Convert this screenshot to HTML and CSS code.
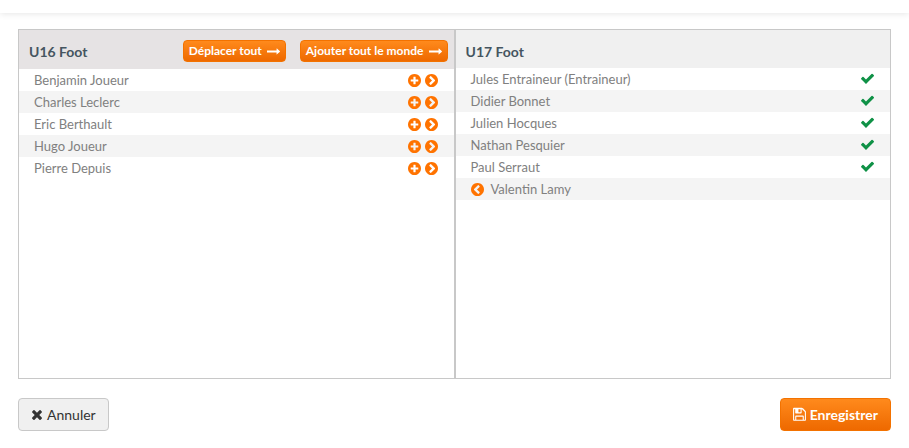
FILE: index.html
```html
<!DOCTYPE html>
<html lang="fr">
<head>
<meta charset="utf-8">
<meta name="viewport" content="width=device-width, initial-scale=1">
<title>Déplacer des membres</title>
<link rel="stylesheet" href="styles.css">
</head>
<body>
<svg class="sprite" aria-hidden="true">
  <symbol id="plus" viewBox="128 128 1536 1536"><path d="M1344 960v-128q0-26-19-45t-45-19h-256v-256q0-26-19-45t-45-19h-128q-26 0-45 19t-19 45v256h-256q-26 0-45 19t-19 45v128q0 26 19 45t45 19h256v256q0 26 19 45t45 19h128q26 0 45-19t19-45v-256h256q26 0 45-19t19-45zm320-64q0 209-103 385.500t-279.500 279.500-385.500 103-385.500-103-279.500-279.500-103-385.500 103-385.500 279.500-279.500 385.500-103 385.500 103 279.500 279.500 103 385.500z"/></symbol>
  <symbol id="chevron" viewBox="128 128 1536 1536"><path d="M845 1395l454-454q19-19 19-45t-19-45l-454-454q-19-19-45-19t-45 19l-102 102q-19 19-19 45t19 45l307 307-307 307q-19 19-19 45t19 45l102 102q19 19 45 19t45-19zm819-499q0 209-103 385.500t-279.500 279.500-385.500 103-385.500-103-279.500-279.500-103-385.500 103-385.500 279.500-279.500 385.500-103 385.500 103 279.500 279.500 103 385.500z"/></symbol>
  <symbol id="check" viewBox="121 128 1550 1792"><path d="M1671 566q0 40-28 68l-724 724-136 136q-28 28-68 28t-68-28l-136-136-362-362q-28-28-28-68t28-68l136-136q28-28 68-28t68 28l294 295 656-657q28-28 68-28t68 28l136 136q28 28 28 68z"/></symbol>
  <symbol id="times" viewBox="179 0 1434 1792"><path d="M1490 1322q0 40-28 68l-136 136q-28 28-68 28t-68-28l-294-294-294 294q-28 28-68 28t-68-28l-136-136q-28-28-28-68t28-68l294-294-294-294q-28-28-28-68t28-68l136-136q28-28 68-28t68 28l294 294 294-294q28-28 68-28t68 28l136 136q28 28 28 68t-28 68l-294 294 294 294q28 28 28 68z"/></symbol>
  <symbol id="floppy" viewBox="128 0 1536 1792"><path d="M512 1536h768v-384h-768v384zm896 0h128v-896q0-14-10-38.500t-20-34.500l-281-281q-10-10-34-20t-39-10v416q0 40-28 68t-68 28h-576q-40 0-68-28t-28-68v-416h-128v1280h128v-416q0-40 28-68t68-28h832q40 0 68 28t28 68v416zm-384-928v-320q0-13-9.500-22.500t-22.500-9.500h-192q-13 0-22.500 9.500t-9.500 22.500v320q0 13 9.500 22.500t22.500 9.500h192q13 0 22.500-9.500t9.500-22.500zm640 32v896q0 40-28 68t-68 28h-1344q-40 0-68-28t-28-68v-1344q0-40 28-68t68-28h928q40 0 88 20t76 48l280 280q28 28 48 76t20 88z"/></symbol>
  <symbol id="arrow" viewBox="32 0 1696 1792"><path d="M1728 893q0 14-10 24l-384 354q-16 14-35 6-19-9-19-29v-224h-1248q-14 0-23-9t-9-23v-192q0-14 9-23t23-9h1248v-224q0-21 19-29t35 5l384 350q10 10 10 23z"/></symbol>
</svg>
<div class="topbar"></div>
<main class="page">
  <div class="lists">
    <section class="list">
      <header class="list-head source">
        <h2>U16 Foot</h2>
        <button type="button" class="btn small primary">Déplacer tout <svg class="icon"><use href="#arrow"/></svg></button>
        <button type="button" class="btn small primary">Ajouter tout le monde <svg class="icon"><use href="#arrow"/></svg></button>
      </header>
      <ul>
        <li><span class="name">Benjamin Joueur</span><button type="button" class="act" aria-label="Ajouter"><svg class="icon"><use href="#plus"/></svg></button><button type="button" class="act" aria-label="Déplacer"><svg class="icon"><use href="#chevron"/></svg></button></li>
        <li><span class="name">Charles Leclerc</span><button type="button" class="act" aria-label="Ajouter"><svg class="icon"><use href="#plus"/></svg></button><button type="button" class="act" aria-label="Déplacer"><svg class="icon"><use href="#chevron"/></svg></button></li>
        <li><span class="name">Eric Berthault</span><button type="button" class="act" aria-label="Ajouter"><svg class="icon"><use href="#plus"/></svg></button><button type="button" class="act" aria-label="Déplacer"><svg class="icon"><use href="#chevron"/></svg></button></li>
        <li><span class="name">Hugo Joueur</span><button type="button" class="act" aria-label="Ajouter"><svg class="icon"><use href="#plus"/></svg></button><button type="button" class="act" aria-label="Déplacer"><svg class="icon"><use href="#chevron"/></svg></button></li>
        <li><span class="name">Pierre Depuis</span><button type="button" class="act" aria-label="Ajouter"><svg class="icon"><use href="#plus"/></svg></button><button type="button" class="act" aria-label="Déplacer"><svg class="icon"><use href="#chevron"/></svg></button></li>
      </ul>
    </section>
    <section class="list">
      <header class="list-head">
        <h2>U17 Foot</h2>
      </header>
      <ul>
        <li><span class="name">Jules Entraineur (Entraineur)</span><svg class="icon ok"><use href="#check"/></svg></li>
        <li><span class="name">Didier Bonnet</span><svg class="icon ok"><use href="#check"/></svg></li>
        <li><span class="name">Julien Hocques</span><svg class="icon ok"><use href="#check"/></svg></li>
        <li><span class="name">Nathan Pesquier</span><svg class="icon ok"><use href="#check"/></svg></li>
        <li><span class="name">Paul Serraut</span><svg class="icon ok"><use href="#check"/></svg></li>
        <li><button type="button" class="act back" aria-label="Retirer"><svg class="icon"><use href="#chevron"/></svg></button><span class="name">Valentin Lamy</span></li>
      </ul>
    </section>
  </div>
  <footer class="actions">
    <button type="button" class="btn neutral"><svg class="icon"><use href="#times"/></svg>Annuler</button>
    <button type="submit" class="btn primary"><svg class="icon"><use href="#floppy"/></svg>Enregistrer</button>
  </footer>
</main>
</body>
</html>
```
FILE: styles.css
```css
* { box-sizing: border-box; }

body {
  margin: 0;
  background: #fff;
  color: #808080;
  font: 13px/22px Lato, "Liberation Sans", sans-serif;
}

.sprite { display: none; }

.icon {
  display: block;
  flex: none;
  width: 13px;
  height: 15px;
  fill: currentColor;
}

.topbar {
  height: 13px;
  box-shadow: 0 1px 6px rgba(0, 0, 0, 0.1);
}

.page { padding: 16px 18px; }

.lists {
  display: grid;
  grid-template-columns: 1fr 1fr;
  min-height: 350px;
}

.list { border: 1px solid #c8c8c8; }

.list-head {
  display: flex;
  align-items: center;
  gap: 14px;
  min-height: 38px;
  padding: 10px 6px 4px 10px;
  background: #f0f0f0;
}

.list-head.source {
  padding-bottom: 7px;
  background: #e6e3e4;
}

.list-head h2 {
  flex: 1;
  margin: 0;
  color: #455560;
  font-size: 14px;
  font-weight: 700;
  line-height: 24px;
}

.source h2 {
  padding-top: 2px;
  line-height: 20px;
}

ul {
  margin: 0;
  padding: 0;
  list-style: none;
}

li {
  display: flex;
  align-items: center;
  gap: 4px;
  height: 22px;
  padding: 0 16px 0 15px;
}

li:nth-child(even) { background: #f4f4f4; }

.name { flex: 1; }

.act {
  padding: 1px 0 0;
  border: 0;
  background: none;
  color: #ff7300;
  cursor: pointer;
}

.act .icon { height: 13px; }

.back { margin-right: 3px; }

.back .icon { transform: scaleX(-1); }

.ok { color: #0f9146; }

.btn {
  display: inline-flex;
  align-items: center;
  gap: 4px;
  height: 33px;
  padding: 0 12px;
  border: 1px solid;
  border-radius: 4px;
  font: 14px/20px Lato, "Liberation Sans", sans-serif;
  cursor: pointer;
}

.primary {
  border-color: #f37200;
  background: linear-gradient(#ff8a1c, #ee6900);
  color: #fff;
  font-weight: 700;
}

.neutral {
  border-color: #c8c8c8;
  background: #f0f0f0;
  color: #333;
}

.neutral .icon { width: 12px; }

.small {
  gap: 5px;
  height: 22px;
  padding: 0 5px;
  font-size: 12px;
}

.actions {
  display: flex;
  justify-content: space-between;
  margin-top: 19px;
}
```
